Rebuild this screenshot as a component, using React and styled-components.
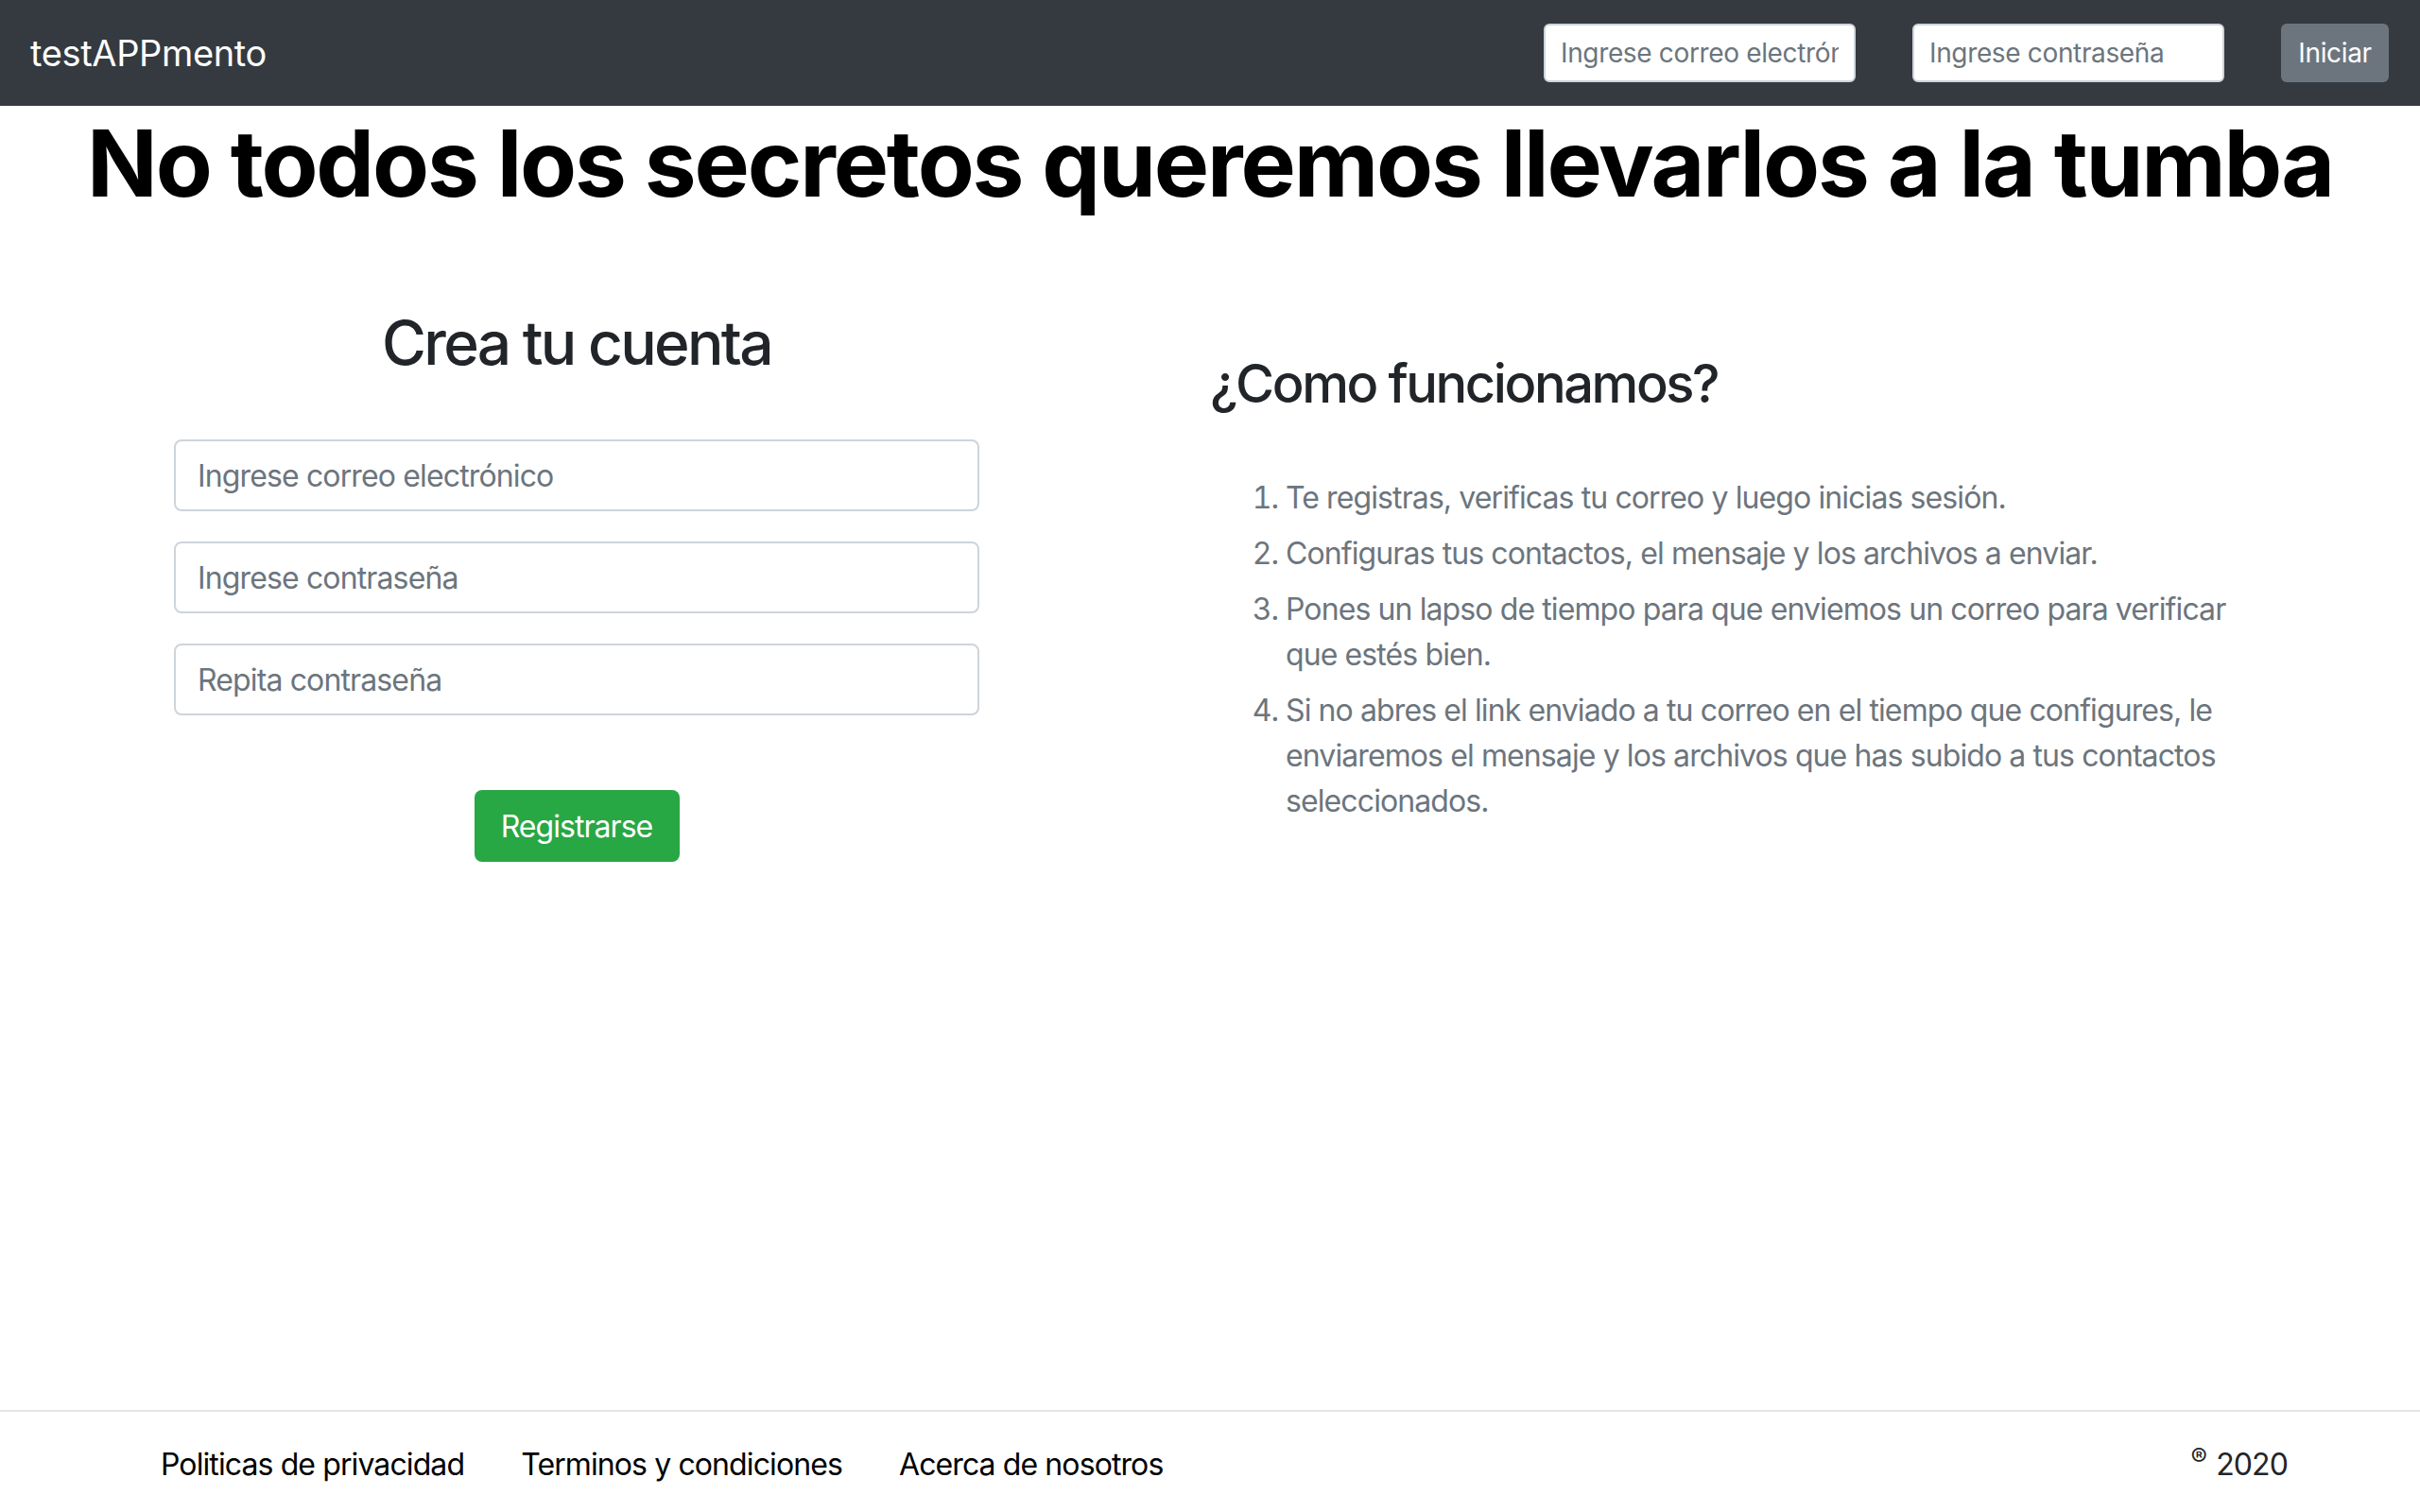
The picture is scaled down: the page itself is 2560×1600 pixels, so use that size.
import React from 'react'
import styled, { createGlobalStyle } from 'styled-components'

const GlobalStyle = createGlobalStyle`
    * {
        box-sizing: border-box;
    }

    body {
        margin: 0;
        font-family: Inter, "Noto Sans", sans-serif;
        letter-spacing: -0.022em;
        color: #212529;
        background: #fff;
    }
`

const steps = [
    'Te registras, verificas tu correo y luego inicias sesión.',
    'Configuras tus contactos, el mensaje y los archivos a enviar.',
    'Pones un lapso de tiempo para que enviemos un correo para verificar que estés bien.',
    'Si no abres el link enviado a tu correo en el tiempo que configures, le enviaremos el mensaje y los archivos que has subido a tus contactos seleccionados.',
]

const footerLinks = ['Politicas de privacidad', 'Terminos y condiciones', 'Acerca de nosotros']

const App = () => {
    return (
        <Page>
            <GlobalStyle />
            <Navbar>
                <Brand>testAPPmento</Brand>
                <LoginForm>
                    <NavInput type="email" placeholder="Ingrese correo electrónico" />
                    <NavInput type="password" placeholder="Ingrese contraseña" />
                    <NavButton>Iniciar</NavButton>
                </LoginForm>
            </Navbar>

            <Title>No todos los secretos queremos llevarlos a la tumba</Title>

            <Content>
                <SignUp>
                    <SignUpTitle>Crea tu cuenta</SignUpTitle>
                    <Field type="email" placeholder="Ingrese correo electrónico" />
                    <Field type="password" placeholder="Ingrese contraseña" />
                    <Field type="password" placeholder="Repita contraseña" />
                    <RegisterButton>Registrarse</RegisterButton>
                </SignUp>

                <HowItWorks>
                    <HowTitle>¿Como funcionamos?</HowTitle>
                    <Steps>
                        {steps.map((step) => (
                            <li key={step}>{step}</li>
                        ))}
                    </Steps>
                </HowItWorks>
            </Content>

            <Footer>
                <FooterLinks>
                    {footerLinks.map((link) => (
                        <FooterLink key={link} href="#">{link}</FooterLink>
                    ))}
                </FooterLinks>
                <Copy><sup>®</sup> 2020</Copy>
            </Footer>
        </Page>
    )
}

export default App

const Page = styled.div`
    min-height: 100vh;
    display: flex;
    flex-direction: column;
`

const Navbar = styled.nav`
    height: 112px;
    background: #343a40;
    padding: 0 33px 0 32px;
    display: flex;
    align-items: center;
    justify-content: space-between;
`

const Brand = styled.a`
    color: #fff;
    font-size: 38px;
    line-height: 1.5;
`

const LoginForm = styled.form`
    display: flex;
    align-items: center;
    gap: 60px;
`

const NavInput = styled.input`
    width: 330px;
    height: 62px;
    padding: 0 16px;
    font-family: inherit;
    font-size: 28px;
    letter-spacing: inherit;
    color: #495057;
    border: 2px solid #ced4da;
    border-radius: 6px;
    background: #fff;

    &::placeholder {
        color: #6c757d;
    }
`

const NavButton = styled.button`
    width: 114px;
    height: 62px;
    font-family: inherit;
    font-size: 28px;
    letter-spacing: inherit;
    color: #fff;
    background: #6c757d;
    border: none;
    border-radius: 6px;
`

const Title = styled.h1`
    margin: 2px 0 0;
    font-size: 98px;
    font-weight: 700;
    line-height: 1.2;
    letter-spacing: -0.022em;
    color: #000;
    text-align: center;
`

const Content = styled.main`
    display: flex;
    gap: 60px;
`

const SignUp = styled.section`
    width: 1220px;
    display: flex;
    flex-direction: column;
    align-items: center;
`

const SignUpTitle = styled.h2`
    margin: 93px 0 64px;
    font-size: 64px;
    font-weight: 500;
    line-height: 1.2;
    letter-spacing: -0.042em;
`

const Field = styled.input`
    width: 852px;
    height: 76px;
    margin-bottom: 32px;
    padding: 0 23px;
    font-family: inherit;
    font-size: 32px;
    letter-spacing: -0.027em;
    color: #495057;
    border: 2px solid #ced4da;
    border-radius: 8px;

    &::placeholder {
        color: #6c757d;
    }
`

const RegisterButton = styled.button`
    margin-top: 47px;
    width: 217px;
    height: 76px;
    font-family: inherit;
    font-size: 32px;
    letter-spacing: -0.03em;
    color: #fff;
    background: #28a745;
    border: none;
    border-radius: 8px;
`

const HowItWorks = styled.section`
    width: 1100px;
    padding-top: 141px;
`

const HowTitle = styled.h3`
    margin: 0 0 63px;
    font-size: 56px;
    font-weight: 500;
    line-height: 1.2;
    letter-spacing: -0.043em;
`

const Steps = styled.ol`
    margin: 0;
    padding-left: 80px;
    font-size: 32px;
    line-height: 48px;
    letter-spacing: -0.028em;
    color: #6c757d;

    li {
        margin-bottom: 11px;
    }
`

const Footer = styled.footer`
    margin-top: auto;
    height: 108px;
    border-top: 2px solid #e5e5e5;
    padding: 32px 140px 0 170px;
    display: flex;
    justify-content: space-between;
    align-items: flex-start;
    font-size: 32px;
    line-height: 48px;
    letter-spacing: -0.028em;
`

const FooterLinks = styled.div`
    display: flex;
    gap: 60px;
`

const FooterLink = styled.a`
    color: #000;
    text-decoration: none;
`

const Copy = styled.span`
    color: #212529;

    sup {
        font-size: 26px;
        vertical-align: 10px;
        line-height: 0;
        margin-right: 2px;
    }
`
